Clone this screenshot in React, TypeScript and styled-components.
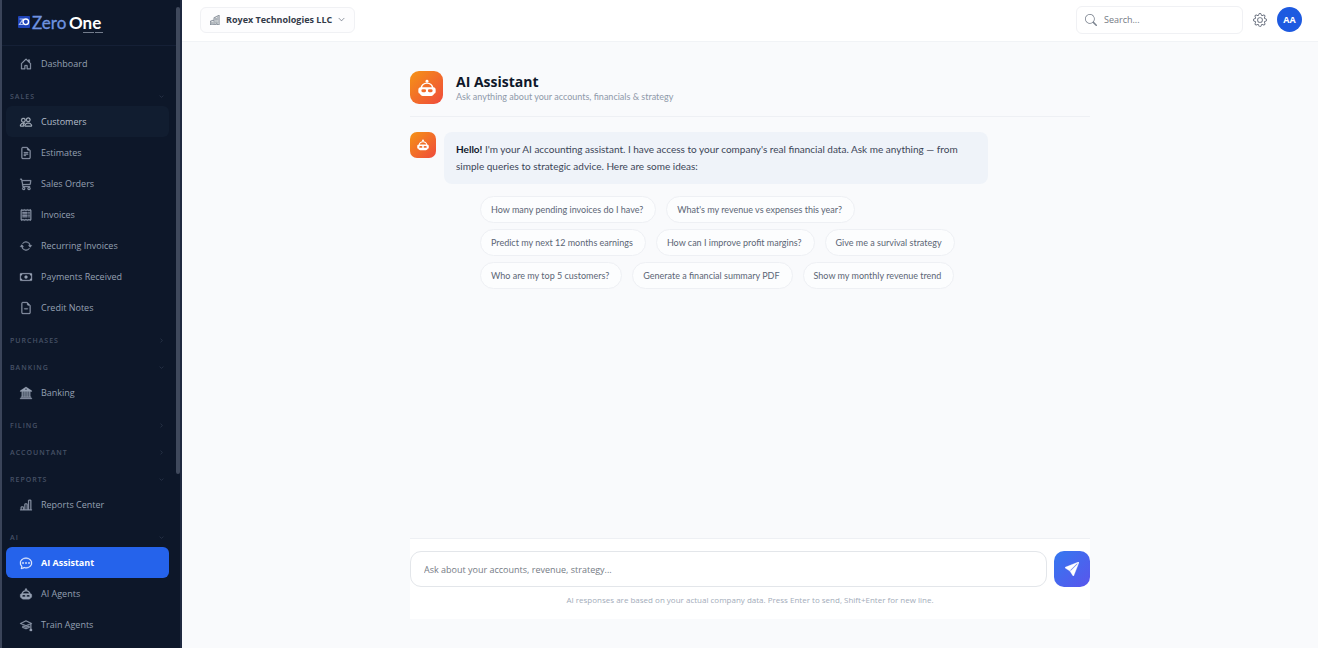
import React from 'react';
import styled, { createGlobalStyle, css } from 'styled-components';
import {
  BsHouseDoor, BsPeople, BsFileEarmarkText, BsCart3, BsReceipt, BsArrowRepeat, BsCash, BsFileEarmarkMinus,
  BsBank2, BsBarChartLine, BsChatDots, BsMortarboard, BsBuildings, BsChevronDown, BsChevronRight,
  BsSearch, BsGear, BsSendFill,
} from 'react-icons/bs';

const GlobalStyle = createGlobalStyle`
  * { box-sizing: border-box; }
  body { margin: 0; background: #f9fafc; color: #1e293b; font-family: 'Open Sans', 'Noto Sans', sans-serif; font-size: 9px; }
  button, input { font: inherit; color: inherit; margin: 0; }
  h1, p { margin: 0; }
`;

const Shell = styled.div`
  display: flex;
  height: 100vh;
  overflow: hidden;
`;

const Sidebar = styled.aside`
  position: relative;
  flex: 0 0 182px;
  overflow: hidden;
  background: #0d1729;
  border-left: 2px solid #3a4459;
  border-right: 2px solid #1f2940;
`;

const ScrollThumb = styled.div`
  position: absolute;
  top: 7px;
  right: 0;
  width: 4px;
  height: 72%;
  border-radius: 2px;
  background: #3f495c;
`;

const Brand = styled.a`
  display: flex;
  align-items: center;
  height: 46px;
  padding-left: 16px;
  border-bottom: 1px solid #152036;
`;

const Nav = styled.nav`
  display: flex;
  flex-direction: column;
  padding: 2px 11px 0 4px;
`;

const Section = styled.button`
  display: flex;
  align-items: center;
  justify-content: space-between;
  height: 27px;
  padding: 8px 5px 0 4px;
  border: 0;
  background: none;
  color: #465166;
  font-size: 7px;
  font-weight: 600;
  letter-spacing: 1px;
  text-transform: uppercase;
  svg { width: 5px; height: 5px; }
`;

const NavItem = styled.a<{ $state?: 'active' | 'hover' }>`
  display: flex;
  align-items: center;
  gap: 9px;
  height: 31px;
  padding-left: 14px;
  border-radius: 6px;
  color: #95a0b2;
  font-size: 9px;
  text-decoration: none;
  svg { width: 12px; height: 12px; flex: none; stroke: currentColor; stroke-width: 0.4px; overflow: visible; }
  ${(p) => p.$state === 'hover' && css`background: #111d30; color: #b4bdca;`}
  ${(p) => p.$state === 'active' && css`background: #2563eb; color: #fff; font-weight: 700;`}
`;

const Main = styled.div`
  flex: 1;
  min-width: 0;
  display: flex;
  flex-direction: column;
`;

const TopBar = styled.header`
  display: flex;
  align-items: center;
  flex: 0 0 42px;
  padding: 0 16px 2px 18px;
  background: #fff;
  border-bottom: 1px solid #f1f3f6;
`;

const CompanyButton = styled.button`
  display: flex;
  align-items: center;
  gap: 6px;
  height: 26px;
  padding: 0 9px;
  margin-right: auto;
  border: 1px solid #f0f1f4;
  border-radius: 6px;
  background: #fdfdfe;
  color: #333b49;
  font-size: 9px;
  font-weight: 700;
  svg { color: #7b838f; width: 10px; height: 10px; stroke: currentColor; stroke-width: 0.4px; }
  svg:last-child { width: 7px; height: 7px; }
`;

const SearchBox = styled.label`
  display: flex;
  align-items: center;
  gap: 7px;
  width: 167px;
  height: 28px;
  padding: 0 8px;
  border: 1px solid #f0f1f4;
  border-radius: 6px;
  svg { width: 12px; height: 12px; flex: none; color: #7b838f; }
  input { width: 100%; border: 0; padding: 0; outline: 0; background: none; font-size: 9px; }
  input::placeholder { color: #757b85; opacity: 1; }
`;

const IconButton = styled.button`
  display: flex;
  padding: 0;
  margin: 0 10px;
  border: 0;
  background: none;
  color: #6b7280;
  svg { width: 14px; height: 14px; }
`;

const Avatar = styled.button`
  width: 25px;
  height: 25px;
  padding: 0;
  border: 0;
  border-radius: 50%;
  background: #1d5ae0;
  color: #fff;
  font-size: 9px;
  font-weight: 700;
`;

const Column = styled.main`
  flex: 1;
  display: flex;
  flex-direction: column;
  width: 60%;
  max-width: 680px;
  min-width: 620px;
  margin: 0 auto;
  padding: 29px 0;
`;

const PageHead = styled.div`
  display: flex;
  align-items: center;
  gap: 13px;
  padding-bottom: 12px;
  border-bottom: 1px solid #eef0f4;
`;

const BotTile = styled.div<{ $small?: boolean }>`
  display: flex;
  align-items: center;
  justify-content: center;
  flex: none;
  width: ${(p) => (p.$small ? 26 : 33)}px;
  height: ${(p) => (p.$small ? 26 : 33)}px;
  border-radius: ${(p) => (p.$small ? 7 : 9)}px;
  background: linear-gradient(135deg, #f59316, #ef4a3c);
  color: #fff;
  svg { width: ${(p) => (p.$small ? 12 : 18)}px; height: ${(p) => (p.$small ? 12 : 18)}px; }
`;

const Title = styled.h1`
  color: #0f172a;
  font-size: 14px;
  line-height: 18px;
  font-weight: 700;
`;

const Subtitle = styled.p`
  color: #8f99a9;
  font-family: Lato, 'Open Sans', sans-serif;
  font-size: 9px;
  line-height: 12px;
`;

const Message = styled.div`
  display: flex;
  gap: 8px;
  margin-top: 15px;
`;

const Bubble = styled.p`
  width: 544px;
  padding: 9px 12px;
  border-radius: 8px;
  background: #eff3f9;
  color: #3b4557;
  font-family: Lato, 'Open Sans', sans-serif;
  font-size: 10px;
  line-height: 17px;
  b { color: #0f172a; }
`;

const Suggestions = styled.div`
  display: flex;
  flex-wrap: wrap;
  gap: 6px 10px;
  max-width: 530px;
  margin: 12px 0 0 70px;
`;

const Chip = styled.button`
  height: 27px;
  padding: 0 12px 0 10px;
  border: 1px solid #eef0f4;
  border-radius: 14px;
  background: #fcfdfe;
  color: #5b6575;
  font-family: Lato, 'Open Sans', sans-serif;
  font-size: 9px;
`;

const Composer = styled.form`
  margin-top: auto;
  padding: 12px 0 13px;
  border-top: 1px solid #eef0f4;
  background: #fff;
`;

const ComposerRow = styled.div`
  display: flex;
  gap: 7px;
`;

const Prompt = styled.input`
  flex: 1;
  height: 36px;
  padding: 0 13px;
  border: 1px solid #e3e6ea;
  border-radius: 11px;
  background: #fff;
  font-size: 9px;
  outline: 0;
  &::placeholder { color: #757b85; opacity: 1; }
`;

const SendButton = styled.button`
  display: flex;
  align-items: center;
  justify-content: center;
  width: 36px;
  height: 36px;
  padding: 0;
  border: 0;
  border-radius: 10px;
  background: linear-gradient(135deg, #3478f0, #5a55ec);
  color: #fff;
  svg { width: 14px; height: 14px; stroke: currentColor; stroke-width: 0.4px; }
`;

const Note = styled.p`
  margin-top: 7px;
  color: #a3acba;
  font-size: 8px;
  line-height: 12px;
  text-align: center;
`;

const Robot = () => (
  <svg viewBox="0 0 16 16" width="16" height="16" aria-hidden="true" stroke="none">
    <circle cx="8" cy="2" r="1.300" fill="currentColor" />
    <path
      fill="currentColor"
      fillRule="evenodd"
      d="M8 3C11.300 3 13.200 4.900 13.700 7.400C15 7.500 15.700 8.300 15.700 9.500V11.300C15.700 12.500 15 13 14.200 13.100C13.800 14.400 13 15 11.800 15H4.200C3 15 2.200 14.400 1.800 13.100C1 13 .300 12.500 .300 11.300V9.500C.300 8.300 1 7.500 2.300 7.400C2.800 4.900 4.700 3 8 3ZM8 4.300C5.600 4.300 4.200 5.500 3.700 7.400H12.300C11.800 5.500 10.400 4.300 8 4.300ZM4.300 9.200A1.300 1.300 0 0 0 4.300 11.800H5.900A1.300 1.300 0 0 0 5.900 9.200ZM10.100 9.200A1.300 1.300 0 0 0 10.100 11.800H11.700A1.300 1.300 0 0 0 11.700 9.200Z"
    />
  </svg>
);

type Entry = { label: string; icon: React.ComponentType; state?: 'active' | 'hover' };
type Group = { title?: string; open?: boolean; items: Entry[] };

const groups: Group[] = [
  { items: [{ label: 'Dashboard', icon: BsHouseDoor }] },
  {
    title: 'Sales', open: true, items: [
      { label: 'Customers', icon: BsPeople, state: 'hover' },
      { label: 'Estimates', icon: BsFileEarmarkText },
      { label: 'Sales Orders', icon: BsCart3 },
      { label: 'Invoices', icon: BsReceipt },
      { label: 'Recurring Invoices', icon: BsArrowRepeat },
      { label: 'Payments Received', icon: BsCash },
      { label: 'Credit Notes', icon: BsFileEarmarkMinus },
    ],
  },
  { title: 'Purchases', items: [] },
  { title: 'Banking', open: true, items: [{ label: 'Banking', icon: BsBank2 }] },
  { title: 'Filing', items: [] },
  { title: 'Accountant', items: [] },
  { title: 'Reports', open: true, items: [{ label: 'Reports Center', icon: BsBarChartLine }] },
  {
    title: 'AI', open: true, items: [
      { label: 'AI Assistant', icon: BsChatDots, state: 'active' },
      { label: 'AI Agents', icon: Robot },
      { label: 'Train Agents', icon: BsMortarboard },
    ],
  },
];

const suggestions = [
  'How many pending invoices do I have?',
  "What's my revenue vs expenses this year?",
  'Predict my next 12 months earnings',
  'How can I improve profit margins?',
  'Give me a survival strategy',
  'Who are my top 5 customers?',
  'Generate a financial summary PDF',
  'Show my monthly revenue trend',
];

const Logo = () => (
  <svg width="92" height="28" viewBox="0 0 92 28" role="img" aria-label="ZeroOne">
    <rect x="0" y="7" width="12" height="12" rx="1" fill="#1f44b8" />
    <path d="M1.500 10H5L1.500 15.500H5" fill="none" stroke="#a9bdf0" strokeWidth="1.200" />
    <circle cx="7.800" cy="12.800" r="2.800" fill="none" stroke="#fff" strokeWidth="1.400" />
    <text x="14" y="20" fontFamily="Lato, sans-serif" fontSize="17" fill="#6f93e0" stroke="#6f93e0" strokeWidth="0.300">Zero</text>
    <text x="51" y="20" fontFamily="Lato, sans-serif" fontSize="17" fontWeight="700" fill="#fff">One</text>
    <path d="M65 23.500H85" stroke="#b8c0cf" strokeWidth="1" strokeDasharray="11 1 8 1" opacity="0.600" />
  </svg>
);

export default function App() {
  return (
    <>
      <GlobalStyle />
      <Shell>
        <Sidebar>
          <Brand href="#"><Logo /></Brand>
          <Nav>
            {groups.map((g, i) => (
              <React.Fragment key={i}>
                {g.title && (
                  <Section type="button" aria-expanded={!!g.open}>
                    {g.title}
                    {g.open ? <BsChevronDown /> : <BsChevronRight />}
                  </Section>
                )}
                {g.items.map(({ label, icon: Icon, state }) => (
                  <NavItem key={label} href="#" $state={state}><Icon />{label}</NavItem>
                ))}
              </React.Fragment>
            ))}
          </Nav>
          <ScrollThumb aria-hidden="true" />
        </Sidebar>
        <Main>
          <TopBar>
            <CompanyButton type="button"><BsBuildings />Royex Technologies LLC<BsChevronDown /></CompanyButton>
            <SearchBox><BsSearch /><input type="search" aria-label="Search" placeholder="Search..." /></SearchBox>
            <IconButton type="button" aria-label="Settings"><BsGear /></IconButton>
            <Avatar type="button">AA</Avatar>
          </TopBar>
          <Column>
            <PageHead>
              <BotTile><Robot /></BotTile>
              <div>
                <Title>AI Assistant</Title>
                <Subtitle>Ask anything about your accounts, financials &amp; strategy</Subtitle>
              </div>
            </PageHead>
            <Message>
              <BotTile $small><Robot /></BotTile>
              <Bubble>
                <b>Hello!</b> I'm your AI accounting assistant. I have access to your company's real financial data. Ask me anything — from simple queries to strategic advice. Here are some ideas:
              </Bubble>
            </Message>
            <Suggestions>
              {suggestions.map((s) => <Chip key={s} type="button">{s}</Chip>)}
            </Suggestions>
            <Composer onSubmit={(e) => e.preventDefault()}>
              <ComposerRow>
                <Prompt aria-label="Message" placeholder="Ask about your accounts, revenue, strategy..." />
                <SendButton type="submit" aria-label="Send"><BsSendFill /></SendButton>
              </ComposerRow>
              <Note>AI responses are based on your actual company data. Press Enter to send, Shift+Enter for new line.</Note>
            </Composer>
          </Column>
        </Main>
      </Shell>
    </>
  );
}
